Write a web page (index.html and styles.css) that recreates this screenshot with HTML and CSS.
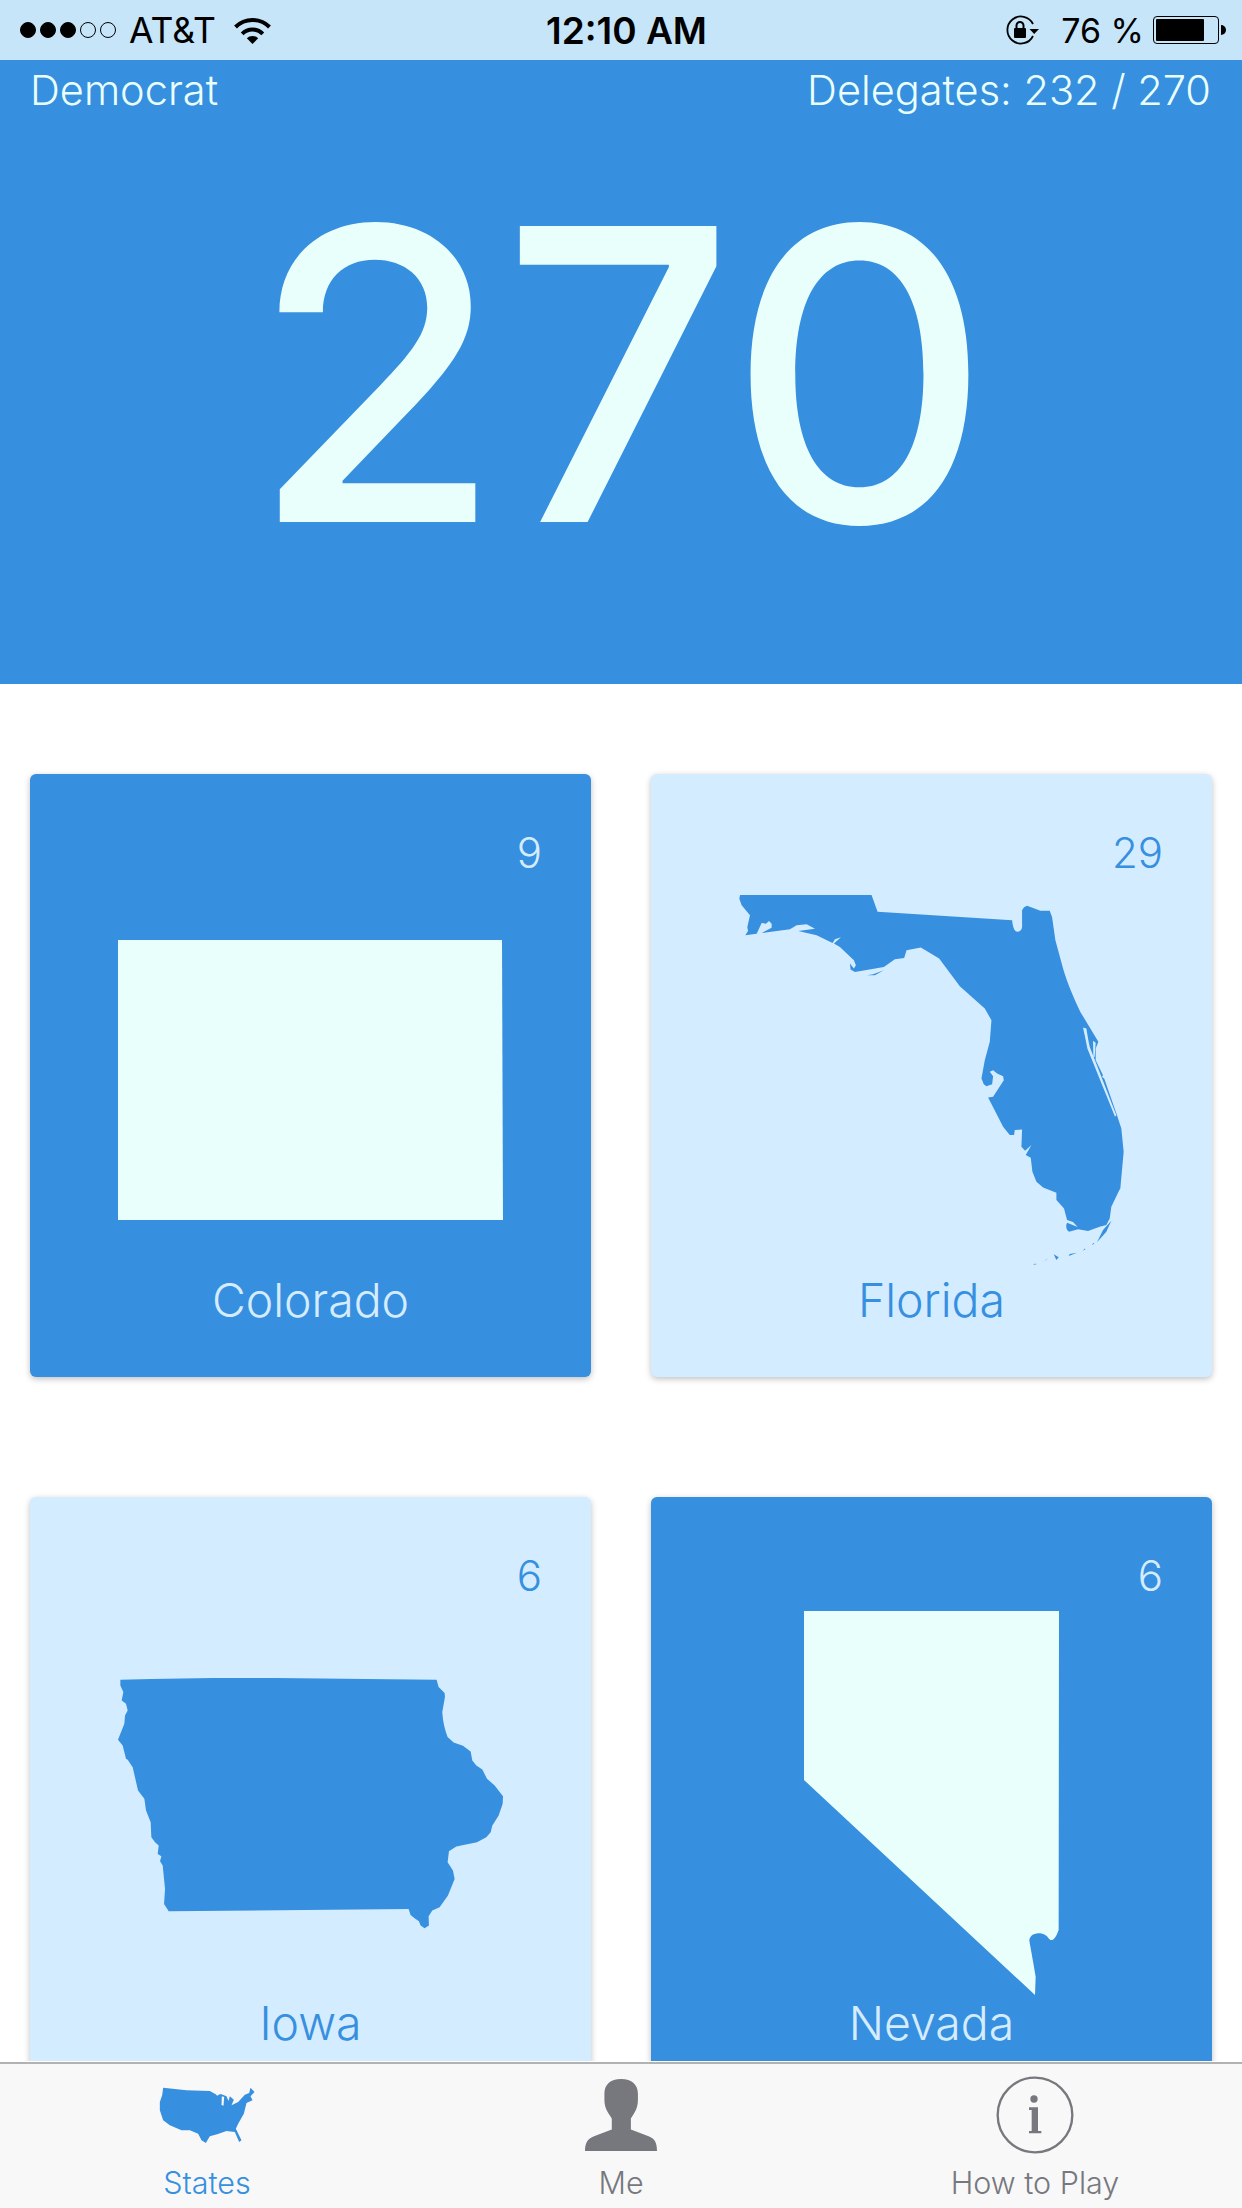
FILE: index.html
```html
<!DOCTYPE html>
<html lang="en">
<head>
<meta charset="utf-8">
<title>270</title>
<link rel="stylesheet" href="styles.css">
</head>
<body>
<div class="app">
  <div class="status">
    <div class="status-left">
      <div class="signal"><i class="dot on"></i><i class="dot on"></i><i class="dot on"></i><i class="dot"></i><i class="dot"></i></div>
      <span class="carrier">AT&amp;T</span>
      <svg class="wifi" width="37" height="27" viewBox="0 0 37 27"><path d="M1.5 10A24 24 0 0 1 35.5 10" fill="none" stroke="#000" stroke-width="4"/><path d="M8.2 16.8A14.5 14.5 0 0 1 28.8 16.8" fill="none" stroke="#000" stroke-width="4"/><path d="M18.5 27L12.8 21.3A8 8 0 0 1 24.2 21.3Z" fill="#000"/></svg>
    </div>
    <div class="clock">12:10 AM</div>
    <div class="status-right">
      <svg class="lock" width="35" height="30" viewBox="0 0 35 30"><path d="M28 21A13.5 13.5 0 1 1 28 9" fill="none" stroke="#000" stroke-width="1.8"/><path d="M24.500 14H34L29.200 19Z" fill="#000"/><rect x="9" y="13" width="12" height="10" rx="1" fill="#000"/><path d="M11.500 13V10.500A3.500 3.500 0 0 1 18.500 10.500V13" fill="none" stroke="#000" stroke-width="2"/></svg>
      <span class="battery-text">76 %</span>
      <div class="battery"><div class="shell"><div class="fill"></div></div><div class="nub"></div></div>
    </div>
  </div>

  <header class="score">
    <div class="score-row"><span>Democrat</span><span>Delegates: 232 / 270</span></div>
    <div class="score-value">270</div>
  </header>

  <main class="states">
    <article class="card won">
      <div class="votes">9</div>
      <div class="map"><svg width="385" height="280" viewBox="0 0 385 280"><path class="land" d="M0 0H384L385 280H0Z"/></svg></div>
      <div class="name">Colorado</div>
    </article>

    <article class="card">
      <div class="votes">29</div>
      <div class="map"><svg width="385" height="370" viewBox="238 104 1154 1111">
        <path class="land" d="M240 104L635 104L653 154L1057 180C1060 205 1065 215 1074 214C1085 213 1088 205 1087 190L1087 150C1090 142 1095 138 1102 136L1142 151L1170 151L1177 170L1187 240L1210 325C1225 375 1245 420 1262 455L1316 545L1308 565L1308 600L1330 645L1327 650L1334 656L1372 765L1385 805L1392 875L1382 985L1378 992L1355 1040L1350 1075L1340 1095L1320 1100L1285 1113L1255 1108L1228 1115C1220 1110 1217 1098 1222 1088L1254 1101L1240 1086L1222 1080L1213 1045L1190 1020L1190 998L1150 982L1130 965L1118 935L1113 893L1098 885L1115 855L1096 872L1085 860L1087 808L1065 810L1063 825L1050 825L1030 800L985 712L1000 710L1032 660L1030 648L1012 640L1000 630L990 635L1000 648L997 672L980 678L972 672L965 655L975 600L990 545L995 480L975 445L900 378L838 295L783 262L740 270L733 293L705 297L672 320L585 335L572 328L570 310L582 325L588 315L582 300L540 260L522 250L543 231L525 237L518 248L470 225L415 212L465 205L440 192L410 195L390 207L305 218L335 202L335 190L327 182L318 190L305 188L290 220L256 225L264 212L262 200L270 165L245 135L238 115Z"/>
        <path class="land" d="M672 330L645 345L622 345L640 342ZM1355 1082L1340 1115L1312 1147L1330 1110ZM1305 1150L1297 1156L1300 1150ZM1278 1167L1270 1172L1274 1166ZM1252 1178L1227 1188L1230 1182ZM1182 1183L1197 1192L1190 1200ZM1165 1195L1150 1207L1160 1198ZM1132 1212L1120 1215L1125 1211Z"/>
        <path class="cut" d="M1270 502L1280 505L1286 540L1290 560L1370 765L1366 770L1283 565L1275 525ZM1300 542L1308 548L1305 590L1301 590ZM1063 880L1070 852L1078 880L1086 895L1072 892Z"/>
      </svg></div>
      <div class="name">Florida</div>
    </article>

    <article class="card">
      <div class="votes">6</div>
      <div class="map"><svg width="385" height="252" viewBox="86 80 1154 755"><path class="land" d="M93 88C400 78 700 84 1041 88L1047 110L1065 128L1066 140L1058 185C1060 215 1065 235 1074 260L1092 276L1120 286L1143 303L1148 330L1160 345L1178 357L1192 385L1215 405L1240 437L1239 460L1227 495L1208 525L1203 545L1190 560L1162 575L1100 588L1078 602L1074 635L1090 660L1095 685L1075 735L1050 770L1028 780L1017 797L1018 825L1005 833L993 825L988 812L975 803L963 793L957 775L238 782L224 760L227 715L220 645L212 632L216 617L205 610L208 585L197 575L186 560L184 515L170 480L165 445L146 420L130 350L115 328L110 325L100 285L86 268L105 220L107 195L115 180L110 160L97 150L102 125L93 105Z"/></svg></div>
      <div class="name">Iowa</div>
    </article>

    <article class="card won">
      <div class="votes">6</div>
      <div class="map"><svg width="255" height="384" viewBox="72 93 765 1152"><path class="land" d="M72 93L837 93L836 1050C828 1072 820 1082 812 1080C805 1078 802 1062 780 1060C760 1058 748 1070 748 1082L760 1150L767 1190L765 1245L72 600Z"/></svg></div>
      <div class="name">Nevada</div>
    </article>
  </main>

  <nav class="tabs">
    <div class="tab active">
      <div class="tab-icon"><svg width="96" height="56" viewBox="88 80 287 168"><path class="us" d="M100 82L170 90L240 92L255 100L275 102L290 108L296 122L300 108L312 118L305 135L325 125L345 103L358 98L362 82L374 95L362 108L368 120L350 128L342 160L325 190L318 205L335 240L328 245L315 215L290 212L262 222L240 228L228 248L215 240L205 220L180 210L155 210L120 195L100 180L90 150L90 125L97 105Z"/><path class="lake" d="M254 98L272 100L262 106ZM276 108L283 110L281 136L275 134Z"/></svg></div>
      <div class="tab-label">States</div>
    </div>
    <div class="tab">
      <div class="tab-icon"><svg width="72" height="72" viewBox="75 87 215 215"><path class="gray" d="M183 87C215 87 233 105 233 130L233 150C233 175 222 190 212 205L212 238L265 258C282 265 290 275 290 302L75 302C75 275 85 265 102 258L155 238L155 205C145 190 133 175 133 150L133 130C133 105 150 87 183 87Z"/></svg></div>
      <div class="tab-label">Me</div>
    </div>
    <div class="tab">
      <div class="tab-icon"><svg width="78" height="78" viewBox="138 78 234 234"><circle cx="255" cy="195" r="112" fill="none" stroke="#77787e" stroke-width="7"/><circle class="gray" cx="252" cy="147" r="11"/><path class="gray" d="M237 172H264V243H274V250H237V243H245V180H237Z"/></svg></div>
      <div class="tab-label">How to Play</div>
    </div>
  </nav>
</div>
</body>
</html>
```
FILE: styles.css
```css
* { box-sizing: border-box; }
html, body { margin: 0; padding: 0; }
body { background: #fff; font-family: Inter, "Liberation Sans", sans-serif; }
.app { width: 1242px; height: 2208px; display: flex; flex-direction: column; overflow: hidden; }

.status { height: 60px; flex: none; background: #c6e5f9; color: #000; display: grid; grid-template-columns: 1fr auto 1fr; align-items: center; padding: 0 9px 0 20px; font-size: 34px; }
.status-left, .status-right { display: flex; align-items: center; }
.status-right { justify-content: flex-end; padding-right: 7px; }
.signal { display: flex; gap: 4px; }
.dot { width: 16px; height: 16px; border-radius: 50%; border: 1.5px solid #000; display: block; }
.dot.on { background: #000; }
.carrier { margin-left: 13px; font-size: 35.5px; }
.wifi { margin-left: 18px; }
.clock { font-weight: 600; font-size: 37px; }
.battery-text { margin-left: 21px; margin-right: 9px; }
.battery { display: flex; align-items: center; gap: 2px; }
.shell { width: 66px; height: 28px; border: 1.5px solid #000; border-radius: 4px; padding: 2px; }
.fill { width: 48px; height: 100%; background: #000; border-radius: 1px; }
.nub { width: 5px; height: 10px; background: #000; border-radius: 0 5px 5px 0; }

.score { height: 624px; flex: none; background: #368fdf; color: #e9fffb; }
.score-row { height: 60px; display: flex; justify-content: space-between; align-items: center; padding: 0 31px 0 30px; font-size: 41.5px; font-weight: 330; }
.score-value { text-align: center; font-size: 407px; line-height: 440px; margin-top: 34px; font-weight: 480; letter-spacing: 0; }

.states { flex: 1; min-height: 0; overflow: hidden; padding: 90px 30px 0; display: grid; grid-template-columns: 561px 561px; grid-auto-rows: 603px; column-gap: 60px; row-gap: 120px; }
.card { display: flex; flex-direction: column; background: #d4ecff; color: #368fdf; border-radius: 6px; box-shadow: 0 2px 6px rgba(0,0,0,.25); padding-top: 55px; }
.card.won { background: #368fdf; color: #d4ecff; }
.votes { height: 48px; line-height: 48px; text-align: right; padding-right: 49px; font-size: 42px; font-weight: 330; }
.map { height: 405px; display: flex; align-items: center; justify-content: center; }
.map svg { display: block; }
.name { height: 36px; line-height: 36px; text-align: center; font-size: 46.4px; font-weight: 340; }
.land { fill: #368fdf; }
.cut { fill: #d4ecff; }
.won .land { fill: #e9fffb; }

.tabs { flex: none; margin-top: 1px; height: 146px; border-top: 2px solid #b2b2b2; background: #f8f8f8; display: grid; grid-template-columns: repeat(3, 1fr); color: #77787e; }
.tab { display: flex; flex-direction: column; align-items: center; padding-top: 11px; }
.tab.active { color: #368fdf; }
.tab-icon { height: 80px; display: flex; align-items: center; justify-content: center; }
.tab-icon svg { display: block; }
.tab-label { margin-top: 10px; height: 36px; line-height: 36px; font-size: 30.5px; font-weight: 350; }
.us { fill: #368fdf; }
.lake { fill: #f8f8f8; }
.gray { fill: #77787e; }
```
